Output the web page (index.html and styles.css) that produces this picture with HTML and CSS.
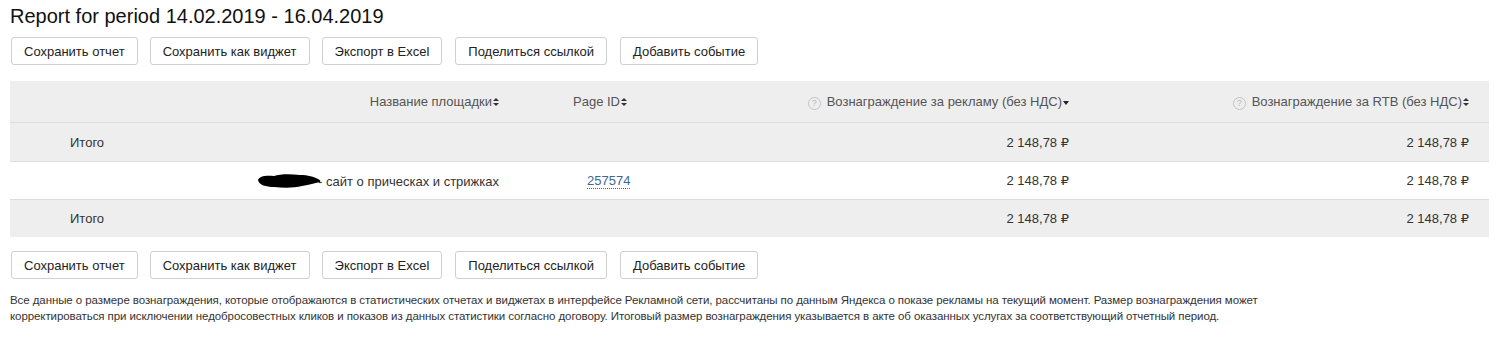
FILE: index.html
```html
<!DOCTYPE html>
<html lang="ru">
<head>
    <meta charset="UTF-8">
    <title>Report for period 14.02.2019 - 16.04.2019</title>
    <link rel="stylesheet" href="styles.css">
</head>
<body>
    <h1 class="title">Report for period 14.02.2019 - 16.04.2019</h1>

    <div class="actions">
        <button class="btn">Сохранить отчет</button>
        <button class="btn">Сохранить как виджет</button>
        <button class="btn">Экспорт в Excel</button>
        <button class="btn">Поделиться ссылкой</button>
        <button class="btn">Добавить событие</button>
    </div>

    <table class="report">
        <colgroup>
            <col class="col-name">
            <col class="col-page">
            <col class="col-ads">
            <col class="col-rtb">
        </colgroup>
        <thead>
            <tr>
                <th class="name">Название площадки<span class="sort"></span></th>
                <th class="page">Page ID<span class="sort"></span></th>
                <th class="num"><span class="hint">?</span>Вознаграждение за рекламу (без НДС)<span class="sort-down"></span></th>
                <th class="num last"><span class="hint">?</span>Вознаграждение за RTB (без НДС)<span class="sort"></span></th>
            </tr>
        </thead>
        <tbody>
            <tr class="total first">
                <td class="label" colspan="2">Итого</td>
                <td class="num">2 148,78 ₽</td>
                <td class="num last">2 148,78 ₽</td>
            </tr>
            <tr>
                <td class="name">
                    <svg class="blot" width="66" height="16" viewBox="0 0 66 16"><path d="M2 7 C3 3 10 2 18 3 C24 1 34 1 44 2 C52 2 58 4 62 6 C64 7 65 8 64 9 C58 10 54 12 46 13 C38 15 28 15 18 14 C10 14 3 12 2 7 Z" fill="#000"/></svg>- сайт о прическах и стрижках
                </td>
                <td class="page"><a class="page-link" href="#">257574</a></td>
                <td class="num">2 148,78 ₽</td>
                <td class="num last">2 148,78 ₽</td>
            </tr>
            <tr class="total">
                <td class="label" colspan="2">Итого</td>
                <td class="num">2 148,78 ₽</td>
                <td class="num last">2 148,78 ₽</td>
            </tr>
        </tbody>
    </table>

    <div class="actions">
        <button class="btn">Сохранить отчет</button>
        <button class="btn">Сохранить как виджет</button>
        <button class="btn">Экспорт в Excel</button>
        <button class="btn">Поделиться ссылкой</button>
        <button class="btn">Добавить событие</button>
    </div>

    <p class="note">Все данные о размере вознаграждения, которые отображаются в статистических отчетах и виджетах в интерфейсе Рекламной сети, рассчитаны по данным Яндекса о показе рекламы на текущий момент. Размер вознаграждения может корректироваться при исключении недобросовестных кликов и показов из данных статистики согласно договору. Итоговый размер вознаграждения указывается в акте об оказанных услугах за соответствующий отчетный период.</p>
</body>
</html>
```

FILE: styles.css
```css
body {
    font-family: "Liberation Sans", Arial, "DejaVu Sans", sans-serif;
    color: #222;
    margin: 0;
    padding: 4px 20px 0 10px;
    background: #fff;
}
.title {
    font-size: 20px;
    font-weight: normal;
    margin: 0;
    line-height: 24px;
    color: #111;
}
.actions {
    display: flex;
    gap: 12px;
    margin: 9px 0 0 1px;
}
.btn {
    font-family: inherit;
    font-size: 13px;
    color: #222;
    background: #fff;
    border: 1px solid #d0d0d0;
    border-radius: 3px;
    height: 28px;
    padding: 0 12px;
}
.btn + .btn:nth-child(4),
.btn + .btn:nth-child(5) { margin-left: 1px; }
.report {
    width: 100%;
    border-collapse: collapse;
    table-layout: fixed;
    margin: 16px 0 14px;
    font-size: 13px;
}
.col-name { width: 495px; }
.col-page { width: 195px; }
.col-ads { width: 385px; }
.report th {
    background: #eee;
    color: #555;
    font-weight: normal;
    height: 41px;
    padding: 0;
    border-bottom: 1px solid #ddd;
}
.report td {
    height: 37px;
    padding: 0;
    color: #333;
    border-bottom: 1px solid #ddd;
}
.report tr.first td { height: 38px; }
.report tr.total td { background: #eee; }
.report tbody tr:last-child td { border-bottom: none; }
.name {
    text-align: right;
    padding-right: 6px !important;
}
.page {
    text-align: left;
    padding-left: 68px !important;
}
td.page { padding-left: 82px !important; }
.num {
    text-align: right;
    padding-right: 16px !important;
}
th.num { padding-right: 16px !important; }
.num.last { padding-right: 20px !important; }
.label { padding-left: 60px !important; }
.blot {
    vertical-align: -3px;
    margin-right: -4px;
}
.page-link {
    color: #3d6a93;
    text-decoration: none;
    border-bottom: 1px dotted #3d6a93;
}
.hint {
    display: inline-block;
    width: 11px;
    height: 11px;
    border: 1px solid #c4c4c4;
    border-radius: 50%;
    color: #b8b8b8;
    font-size: 9px;
    line-height: 11px;
    text-align: center;
    margin-right: 6px;
    vertical-align: 0;
}
.sort, .sort-down {
    display: inline-block;
    position: relative;
    width: 6px;
    height: 9px;
    margin-left: 1px;
    vertical-align: -1px;
}
.sort::before, .sort::after, .sort-down::after {
    content: "";
    position: absolute;
    left: 0;
    border-left: 3px solid transparent;
    border-right: 3px solid transparent;
}
.sort::before {
    top: 0;
    border-bottom: 3px solid #333;
}
.sort::after {
    bottom: 1px;
    border-top: 3px solid #333;
}
.sort-down::after {
    top: 3px;
    border-top: 4px solid #222;
}
.note {
    font-size: 11.5px;
    letter-spacing: -0.08px;
    line-height: 16px;
    color: #333;
    max-width: 1300px;
    margin: 13px 0 0;
}
```
